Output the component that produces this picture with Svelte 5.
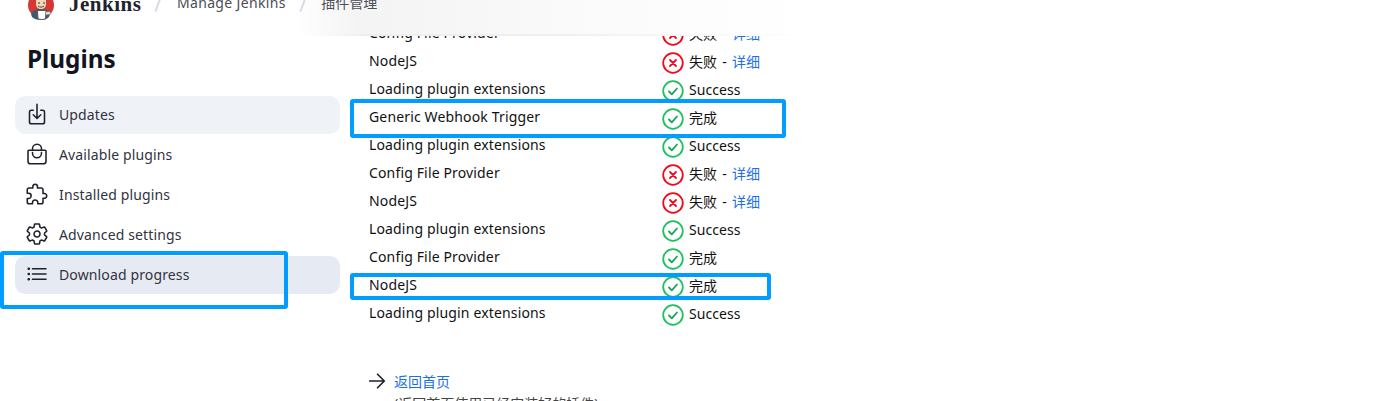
<script>
  const rows = [
    ['Config File Provider', 'fail'],
    ['NodeJS', 'fail'],
    ['Loading plugin extensions', 'ok', 'Success'],
    ['Generic Webhook Trigger', 'ok', '完成'],
    ['Loading plugin extensions', 'ok', 'Success'],
    ['Config File Provider', 'fail'],
    ['NodeJS', 'fail'],
    ['Loading plugin extensions', 'ok', 'Success'],
    ['Config File Provider', 'ok', '完成'],
    ['NodeJS', 'ok', '完成'],
    ['Loading plugin extensions', 'ok', 'Success']
  ];
</script>

<div class="page">
  <header class="top">
    <div class="logo">
      <svg width="26" height="20" viewBox="0 0 26 20">
        <circle cx="13" cy="5" r="13" fill="#d33833"/>
        <path d="M3 14c2-4 7-5 10-5s7 1 9 5l-1 3c-2 2-4 3-8 3s-7-1-9-3z" fill="#3d5a70"/>
        <path d="M8 0h10v4c0 3-2 5-5 5s-5-2-5-5z" fill="#f0d6b7"/>
        <path d="M10 3h2M15 3h2" stroke="#333" stroke-width="1"/>
        <path d="M10 6c2 1.500 4 1.500 6 0" stroke="#7a3a2a" stroke-width="1" fill="none"/>
        <path d="M9.500 10.500h8.500l-.5 8.500q-4 1-7.500 0z" fill="#fff" stroke="#444" stroke-width=".8"/>
        <path d="M18 12c3-1 5 0 5 1s-2 2-5 2" fill="#e8e8e8" stroke="#666" stroke-width=".8"/>
      </svg>
    </div>
    <span class="brand">Jenkins</span>
    <span class="sep s1"></span>
    <span class="crumb latin">Manage Jenkins</span>
    <span class="sep s2"></span>
    <span class="crumb">插件管理</span>
  </header>

  <aside class="side">
    <h1>Plugins</h1>
    <nav>
      <div class="item hover">
        <svg viewBox="0 0 512 512"><path d="M336 176h40a40 40 0 0140 40v208a40 40 0 01-40 40H136a40 40 0 01-40-40V216a40 40 0 0140-40h40M176 272l80 80 80-80M256 48v288"/></svg>
        <span>Updates</span>
      </div>
      <div class="item">
        <svg viewBox="0 0 512 512"><path d="M80 176a16 16 0 00-16 16v216c0 30.240 25.760 56 56 56h272c30.240 0 56-24.510 56-54.750V192a16 16 0 00-16-16zM160 176v-32a96 96 0 0196-96h0a96 96 0 0196 96v32M160 224v16a96 96 0 0096 96h0a96 96 0 0096-96v-16"/></svg>
        <span>Available plugins</span>
      </div>
      <div class="item">
        <svg viewBox="0 0 512 512"><path d="M413.660 246.100H386a2 2 0 01-2-2v-77.240A38.860 38.860 0 00345.140 128H267.900a2 2 0 01-2-2V98.340c0-27.140-21.500-49.860-48.640-50.330a49.530 49.530 0 00-50.400 49.510V126a2 2 0 01-2 2H87.620A39.740 39.740 0 0048 167.620V238a2 2 0 002 2h26.910c29.370 0 53.680 25.480 54.090 54.850.42 29.870-23.510 57.150-53.290 57.150H50a2 2 0 00-2 2v70.380A39.740 39.740 0 0087.620 464H158a2 2 0 002-2v-20.930c0-30.280 24.750-56.350 55-57.060 30.100-.7 57 20.310 57 50.280V462a2 2 0 002 2h71.140A38.860 38.860 0 00384 425.140v-78a2 2 0 012-2h28.480c27.630 0 49.520-22.670 49.520-50.400s-23.200-48.640-50.340-48.640z"/></svg>
        <span>Installed plugins</span>
      </div>
      <div class="item">
        <svg viewBox="0 0 512 512"><path d="M262.290 192.310a64 64 0 1057.400 57.400 64.130 64.130 0 00-57.400-57.400zM416.390 256a154.340 154.340 0 01-1.530 20.790l45.210 35.460a10.810 10.810 0 012.450 13.750l-42.770 74a10.810 10.810 0 01-13.140 4.590l-44.900-18.080a16.110 16.110 0 00-15.170 1.750A164.480 164.480 0 01325 400.800a15.940 15.940 0 00-8.820 12.140l-6.730 47.890a11.080 11.080 0 01-10.680 9.170h-85.540a11.110 11.110 0 01-10.690-8.870l-6.720-47.820a16.070 16.070 0 00-9-12.220 155.300 155.300 0 01-21.460-12.570 16 16 0 00-15.110-1.710l-44.890 18.070a10.810 10.810 0 01-13.140-4.580l-42.770-74a10.800 10.800 0 012.450-13.750l38.210-30a16.050 16.050 0 006-14.080c-.36-4.170-.58-8.330-.58-12.500s.21-8.270.58-12.350a16 16 0 00-6.070-13.940l-38.190-30A10.810 10.810 0 0149.480 186l42.770-74a10.810 10.810 0 0113.140-4.590l44.900 18.080a16.110 16.110 0 0015.170-1.750A164.480 164.480 0 01187 111.200a15.940 15.940 0 008.820-12.140l6.730-47.890A11.080 11.080 0 01213.230 42h85.540a11.110 11.110 0 0110.690 8.870l6.720 47.820a16.070 16.070 0 009 12.220 155.300 155.300 0 0121.460 12.570 16 16 0 0015.110 1.710l44.890-18.070a10.810 10.810 0 0113.140 4.580l42.770 74a10.800 10.800 0 01-2.450 13.750l-38.210 30a16.050 16.050 0 00-6.050 14.080c.33 4.140.55 8.300.55 12.470z"/></svg>
        <span>Advanced settings</span>
      </div>
      <div class="item active">
        <svg viewBox="0 0 512 512"><path d="M160 144h288M160 256h288M160 368h288"/><circle class="dot" cx="80" cy="144" r="16"/><circle class="dot" cx="80" cy="256" r="16"/><circle class="dot" cx="80" cy="368" r="16"/></svg>
        <span>Download progress</span>
      </div>
    </nav>
  </aside>

  <main class="main">
    <div class="table">
      {#each rows as [name, state, label]}
        <div class="row">
          <div class="name">{name}</div>
          <div class="status">
            {#if state === 'ok'}
              <svg class="st ok" viewBox="0 0 22 22"><circle cx="11" cy="11" r="9.800"/><path d="M7 11.500l2.800 2.800L15 8.500"/></svg>
              <span>{label}</span>
            {:else}
              <svg class="st bad" viewBox="0 0 22 22"><circle cx="11" cy="11" r="9.800"/><path d="M8 8l6 6M14 8l-6 6"/></svg>
              <span class="failed">失败 - <a href="#details">详细</a></span>
            {/if}
          </div>
        </div>
      {/each}
    </div>
    <div class="back">
      <svg viewBox="0 0 512 512"><path d="M268 112l144 144-144 144M392 256H100"/></svg>
      <a href="#home">返回首页</a>
    </div>
    <div class="note">(返回首页使用已经安装好的插件)</div>
  </main>

  <div class="box box1"></div>
  <div class="box box2"></div>
  <div class="box box3"></div>
</div>

<style>
  :global(body) {
    margin: 0;
    background: #fff;
  }
  .page {
    position: relative;
    width: 1389px;
    height: 401px;
    overflow: hidden;
    display: flex;
    font-family: "Noto Sans", "Noto Sans CJK SC", sans-serif;
    font-size: 14px;
    color: #14141f;
  }
  .top {
    position: absolute;
    top: 0;
    left: 0;
    width: 815px;
    height: 36px;
    z-index: 2;
    display: flex;
    align-items: flex-start;
    background:
      linear-gradient(90deg, #fff 37%, #eeeeee 45%, #f0f0f0 70%, #fff 100%) bottom / 100% 2px no-repeat,
      linear-gradient(90deg, #fff 36%, #f4f4f4 44%, #f7f7f7 58%, #fdfdfd 85%, #fff 100%);
  }
  .logo {
    width: 26px;
    height: 20px;
    margin-left: 28px;
    overflow: hidden;
  }
  .brand {
    margin-left: 15px;
    margin-top: -6px;
    font-family: "Liberation Serif", serif;
    font-weight: 700;
    font-size: 21px;
    line-height: 20px;
    letter-spacing: 0.5px;
    color: #22222c;
  }
  .sep {
    width: 1.500px;
    height: 15px;
    margin-top: -3px;
    background: #d5dbe7;
    transform: rotate(20deg);
  }
  .s1 {
    margin-left: 16px;
    margin-right: 18px;
  }
  .s2 {
    margin-left: 16px;
    margin-right: 18px;
  }
  .crumb {
    margin-top: -7px;
    line-height: 20px;
    font-size: 14px;
    color: #4d4d57;
  }
  .latin {
    letter-spacing: 0.35px;
  }
  .side {
    width: 340px;
    flex: none;
    box-sizing: border-box;
    padding: 40px 0 0 15px;
  }
  h1 {
    margin: 0 0 19px 12px;
    font-size: 24.300px;
    font-weight: 700;
    line-height: 37px;
    color: #14141f;
  }
  nav {
    display: flex;
    flex-direction: column;
    gap: 2px;
  }
  .item {
    height: 38px;
    box-sizing: border-box;
    padding: 0 0 2px 10px;
    display: flex;
    align-items: center;
    gap: 10px;
    border-radius: 10px;
    color: #333340;
    letter-spacing: 0.13px;
  }
  .item svg {
    width: 24px;
    height: 24px;
    flex: none;
    fill: none;
    stroke: #20202b;
    stroke-width: 33;
    stroke-linecap: round;
    stroke-linejoin: round;
  }
  .item svg .dot {
    stroke-width: 26;
    fill: #20202b;
  }
  .hover {
    background: #eff2f7;
  }
  .active {
    background: #e6eaf2;
  }
  .main {
    padding: 19px 0 0 29px;
    width: 470px;
    box-sizing: border-box;
  }
  .row {
    height: 28px;
    display: flex;
    color: #111;
  }
  .name {
    width: 293px;
    line-height: 28px;
    letter-spacing: 0.15px;
  }
  .status {
    display: flex;
    align-items: center;
    gap: 5px;
    height: 28px;
    letter-spacing: 0.05px;
  }
  .st {
    width: 22px;
    height: 22px;
    margin-top: 3px;
    flex: none;
    fill: none;
    stroke-width: 1.800;
    stroke-linecap: round;
    stroke-linejoin: round;
  }
  .failed {
    word-spacing: 1.500px;
  }
  .ok {
    stroke: #1ec15f;
  }
  .ok path {
    stroke: #17a550;
  }
  .bad {
    stroke: #ee0a1c;
  }
  a {
    color: #1c6fe8;
    text-decoration: none;
  }
  .back {
    margin-top: 42px;
    margin-left: -4px;
    display: flex;
    align-items: center;
    gap: 5px;
    height: 24px;
  }
  .back svg {
    width: 24px;
    height: 24px;
    flex: none;
    fill: none;
    stroke: #20202b;
    stroke-width: 36;
    stroke-linecap: round;
    stroke-linejoin: round;
  }
  .note {
    margin-left: 25px;
    margin-top: 1px;
    font-size: 14px;
    color: #444;
    line-height: 20px;
  }
  .box {
    position: absolute;
    box-sizing: border-box;
    border: 4px solid #009dff;
    border-radius: 3px;
    z-index: 3;
  }
  .box1 {
    left: 350px;
    top: 99px;
    width: 436px;
    height: 39px;
  }
  .box2 {
    left: 0;
    top: 251px;
    width: 288px;
    height: 58px;
  }
  .box3 {
    left: 350px;
    top: 273px;
    width: 421px;
    height: 27px;
  }
</style>
